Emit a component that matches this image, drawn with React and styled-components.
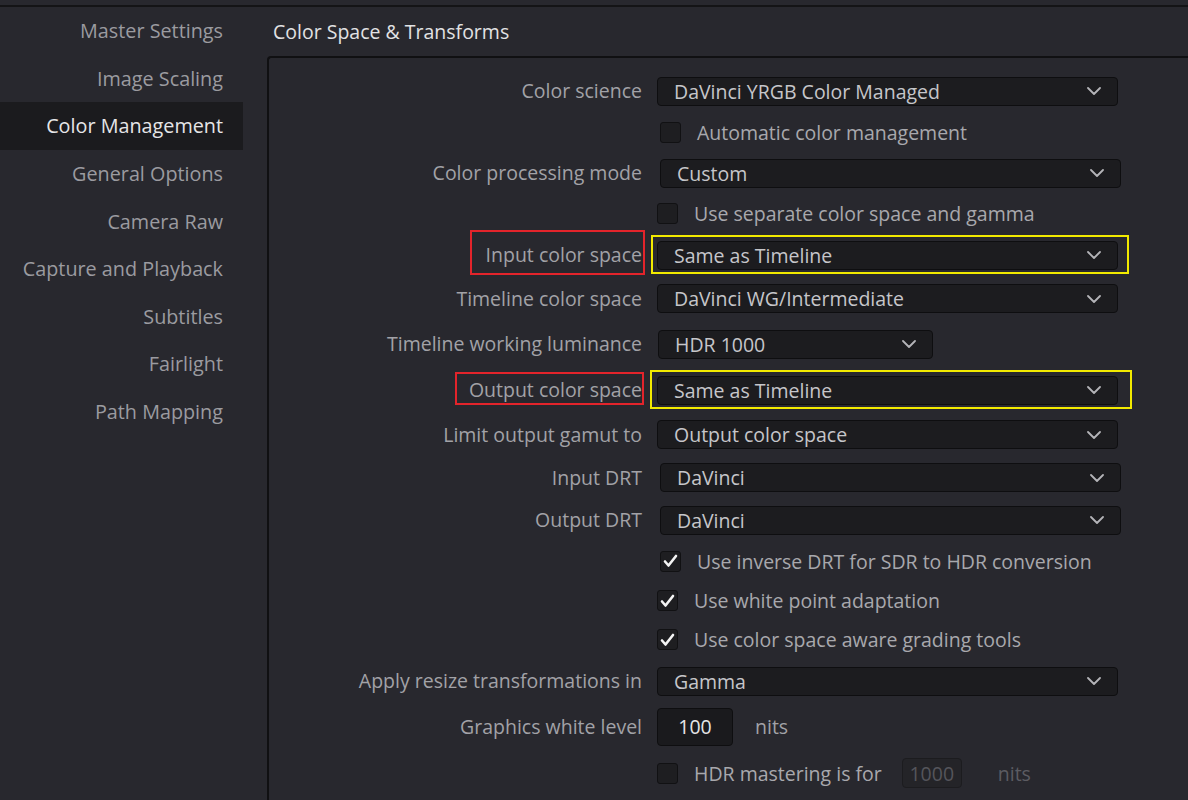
import React from "react";
import styled, { createGlobalStyle } from "styled-components";

const Global = createGlobalStyle`
  html, body { margin: 0; padding: 0; background: #28282e; }
  body { font-family: "Open Sans", "Noto Sans", sans-serif; }
  * { box-sizing: border-box; }
`;

const Page = styled.div`
  width: 1188px;
  height: 800px;
  overflow: hidden;
  background: #28282e;
  display: flex;
  flex-direction: column;
  font-size: 19.5px;
`;

const TopStrip = styled.div`
  height: 7px;
  flex: none;
  border-bottom: 2px solid #141416;
`;

const Body = styled.div`
  flex: 1;
  display: flex;
  min-height: 0;
`;

const Sidebar = styled.nav`
  width: 243px;
  flex: none;
  display: flex;
  flex-direction: column;
  font-size: 19.8px;
`;

const NavItem = styled.div`
  height: 47.6px;
  display: flex;
  align-items: center;
  justify-content: flex-end;
  padding-right: 20px;
  color: ${(p) => (p.$active ? "#e6e6e8" : "#9b9ba0")};
  background: ${(p) => (p.$active ? "#1b1b1e" : "transparent")};
  white-space: nowrap;
`;

const Main = styled.div`
  flex: 1;
  display: flex;
  flex-direction: column;
  padding-left: 24px;
  min-width: 0;
`;

const Header = styled.div`
  height: 49px;
  flex: none;
  display: flex;
  align-items: center;
  padding-left: 6px;
  color: #e2e2e4;
`;

const Panel = styled.section`
  flex: 1;
  border-top: 2px solid #101012;
  border-left: 2px solid #101012;
  border-top-left-radius: 4px;
  background: #28282e;
  padding-top: 12px;
  display: flex;
  flex-direction: column;
`;

const Row = styled.div`
  height: ${(p) => p.$h}px;
  flex: none;
  display: grid;
  grid-template-columns: 373px 1fr;
  column-gap: 15px;
  align-items: center;
`;

const Label = styled.div`
  justify-self: end;
  color: #a2a2a7;
  white-space: nowrap;
  line-height: 26px;
  position: relative;
`;

const Mark = styled.span`
  position: relative;
  display: ${(p) => (p.$block ? "block" : "inline-block")};
  &::after {
    content: "";
    position: absolute;
    top: ${(p) => p.$box[0]}px;
    right: ${(p) => p.$box[1]}px;
    bottom: ${(p) => p.$box[2]}px;
    left: ${(p) => p.$box[3]}px;
    border: 2px solid ${(p) => p.$color};
    pointer-events: none;
  }
`;

const Control = styled.div`
  grid-column: 2;
  margin-left: ${(p) => p.$shift || 0}px;
  display: flex;
  align-items: center;
`;

const SelectBox = styled.div`
  width: ${(p) => p.$w}px;
  height: 29px;
  background: #1c1c1f;
  border: 1px solid #0e0e10;
  border-radius: 4px;
  display: flex;
  align-items: center;
  justify-content: space-between;
  padding: 0 16px 0 16px;
  color: #c6c6ca;
  white-space: nowrap;
`;

const Chevron = styled.svg`
  width: 14px;
  height: 8px;
  flex: none;
`;

const CheckBox = styled.div`
  width: 21px;
  height: 21px;
  flex: none;
  background: #1e1e21;
  border: 1px solid #111113;
  border-radius: 3px;
  display: flex;
  align-items: center;
  justify-content: center;
`;

const CheckText = styled.span`
  margin-left: 16px;
  color: #a8a8ad;
  white-space: nowrap;
`;

const NumBox = styled.div`
  width: ${(p) => p.$w}px;
  height: ${(p) => p.$h}px;
  flex: none;
  background: ${(p) => (p.$disabled ? "#242428" : "#1a1a1d")};
  border: 1px solid ${(p) => (p.$disabled ? "#1c1c1f" : "#0e0e10")};
  border-radius: 4px;
  display: flex;
  align-items: center;
  justify-content: center;
  color: ${(p) => (p.$disabled ? "#55555b" : "#e6e6e8")};
  margin-left: ${(p) => p.$ml || 0}px;
`;

const Unit = styled.span`
  margin-left: ${(p) => p.$ml}px;
  color: ${(p) => (p.$dim ? "#5c5c62" : "#a2a2a7")};
`;

const Title = styled.span``;

function Select({ w = 461, value }) {
  return (
    <SelectBox $w={w}>
      <span>{value}</span>
      <Chevron viewBox="0 0 14 8">
        <polyline points="1,1 7,7 13,1" fill="none" stroke="#b4b4b8" strokeWidth="1.8" strokeLinecap="round" strokeLinejoin="round" />
      </Chevron>
    </SelectBox>
  );
}

function Check({ checked }) {
  return (
    <CheckBox>
      {checked && (
        <svg width="15" height="14" viewBox="0 0 15 14">
          <path d="M2 7.5 L5.5 11.5 L13 2" fill="none" stroke="#f4f4f4" strokeWidth="2.6" strokeLinecap="round" strokeLinejoin="round" />
        </svg>
      )}
    </CheckBox>
  );
}

const nav = [
  "Master Settings",
  "Image Scaling",
  "Color Management",
  "General Options",
  "Camera Raw",
  "Capture and Playback",
  "Subtitles",
  "Fairlight",
  "Path Mapping",
];

const rows = [
  { h: 42, label: "Color science", select: "DaVinci YRGB Color Managed" },
  { h: 41, check: "Automatic color management", shift: 3 },
  { h: 40, label: "Color processing mode", select: "Custom", shift: 3 },
  { h: 41, check: "Use separate color space and gamma" },
  {
    h: 42,
    label: "Input color space",
    select: "Same as Timeline",
    red: [-12, -3, -7, -16],
    yellow: [-6, -11, -4, -6],
  },
  { h: 45, label: "Timeline color space", select: "DaVinci WG/Intermediate" },
  { h: 46, label: "Timeline working luminance", select: "HDR 1000", w: 275, shift: 1 },
  {
    h: 46,
    label: "Output color space",
    select: "Same as Timeline",
    red: [-5, -2, -2, -14],
    yellow: [-6, -14, -4, -7],
  },
  { h: 43, label: "Limit output gamut to", select: "Output color space" },
  { h: 43, label: "Input DRT", select: "DaVinci", shift: 3 },
  { h: 42, label: "Output DRT", select: "DaVinci", shift: 3 },
  { h: 40, check: "Use inverse DRT for SDR to HDR conversion", checked: true, shift: 3 },
  { h: 39, check: "Use white point adaptation", checked: true },
  { h: 39, check: "Use color space aware grading tools", checked: true },
  { h: 44, label: "Apply resize transformations in", select: "Gamma" },
];

export default function App() {
  return (
    <Page>
      <Global />
      <TopStrip />
      <Body>
        <Sidebar>
          {nav.map((n) => (
            <NavItem key={n} $active={n === "Color Management"}>
              {n}
            </NavItem>
          ))}
        </Sidebar>
        <Main>
          <Header>
            <Title>Color Space &amp; Transforms</Title>
          </Header>
          <Panel>
            {rows.map((r, i) => (
              <Row key={i} $h={r.h}>
                {r.label && (
                  <Label>
                    {r.red ? (
                      <Mark $box={r.red} $color="#e3242b">
                        {r.label}
                      </Mark>
                    ) : (
                      r.label
                    )}
                  </Label>
                )}
                <Control $shift={r.shift}>
                  {r.select &&
                    (r.yellow ? (
                      <Mark $box={r.yellow} $color="#f2ea00" $block>
                        <Select value={r.select} w={r.w} />
                      </Mark>
                    ) : (
                      <Select value={r.select} w={r.w} />
                    ))}
                  {r.check && (
                    <>
                      <Check checked={r.checked} />
                      <CheckText>{r.check}</CheckText>
                    </>
                  )}
                </Control>
              </Row>
            ))}
            <Row $h={47}>
              <Label>Graphics white level</Label>
              <Control>
                <NumBox $w={76} $h={38}>100</NumBox>
                <Unit $ml={22}>nits</Unit>
              </Control>
            </Row>
            <Row $h={46}>
              <Control>
                <Check />
                <CheckText>HDR mastering is for</CheckText>
                <NumBox $w={60} $h={30} $disabled $ml={20}>1000</NumBox>
                <Unit $ml={36} $dim>nits</Unit>
              </Control>
            </Row>
          </Panel>
        </Main>
      </Body>
    </Page>
  );
}
